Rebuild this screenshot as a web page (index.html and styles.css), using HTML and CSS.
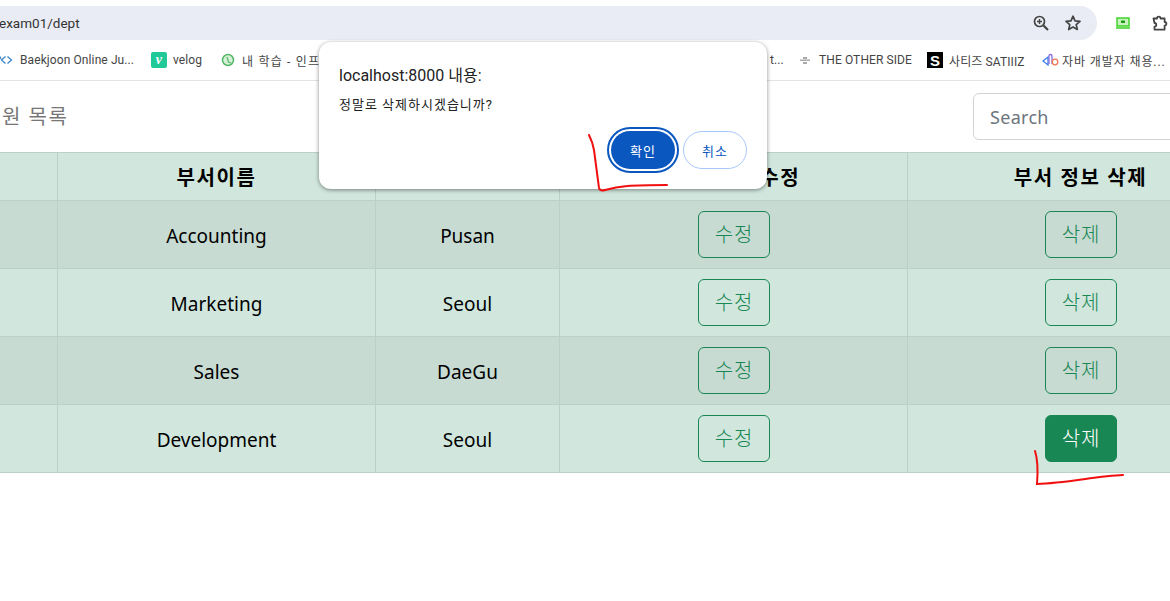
FILE: index.html
```html
<!DOCTYPE html>
<html lang="ko">
<head>
  <meta charset="UTF-8" />
  <title>부서 목록</title>
  <link rel="stylesheet" href="styles.css">
</head>
<body>
  <div class="toolbar">
    <div class="address">
      <span class="url">exam01/dept</span>
      <svg class="addr-icon" width="18" height="18" viewBox="0 0 18 18"><circle cx="7.5" cy="7.5" r="5" fill="none" stroke="#444" stroke-width="1.7"/><path d="M11.5 11.5 16 16" stroke="#444" stroke-width="2.2"/><path d="M5 7.5h5M7.5 5v5" stroke="#444" stroke-width="1.4"/></svg>
      <svg class="addr-icon" width="18" height="18" viewBox="0 0 18 18"><path d="M9 2.2l2 4.6 5 .5-3.8 3.3 1.1 4.9L9 13l-4.300 2.500 1.100-4.900L2 7.300l5-.5z" fill="none" stroke="#444" stroke-width="1.700" stroke-linejoin="round"/></svg>
    </div>
    <svg class="ext" width="14" height="12" viewBox="0 0 14 12"><rect x="1" y="1" width="12" height="8" fill="#c8f2c0" stroke="#35d01f" stroke-width="1.400"/><rect x="5" y="3.500" width="4" height="2.500" fill="#1c9c10"/><path d="M0 11h14" stroke="#35d01f" stroke-width="1.500"/></svg>
    <svg class="puzzle" width="17" height="16" viewBox="0 0 17 16"><path d="M1.500 3.500h3.500a1.800 1.800 0 0 1 3.600 0h4v3.500a1.800 1.800 0 0 1 0 3.600v4H2.500v-3a1.800 1.800 0 0 0 0-3.600z" fill="none" stroke="#444" stroke-width="1.800" stroke-linejoin="round"/></svg>
  </div>

  <div class="bookmarks">
    <span class="mark mark-boj">
      <svg width="16" height="12" viewBox="0 0 16 12"><path d="M1 1l2 4M7.500 2.500 3.500 6l4 3.500M9.500 2.500l4 3.500-4 3.500" fill="none" stroke="#3a86c8" stroke-width="1.300"/></svg>
      Baekjoon Online Ju...
    </span>
    <span class="mark mark-velog"><span class="velog-icon">v</span>velog</span>
    <span class="mark mark-inf">
      <svg width="14" height="14" viewBox="0 0 14 14"><circle cx="7" cy="7" r="5.500" fill="#d6f0d8" stroke="#55b868" stroke-width="1.500"/><path d="M6 4l1.500 5L10 10" fill="none" stroke="#55b868" stroke-width="1.200"/></svg>
      내 학습 - 인프런
    </span>
    <span class="mark mark-trunc">t...</span>
    <span class="mark mark-side">
      <svg width="10" height="8" viewBox="0 0 10 8"><path d="M3 1h4v2H3zM0 3.500h10v1.500H0zM3 6h4v2H3z" fill="#aaa"/></svg>
      THE OTHER SIDE
    </span>
    <span class="mark mark-sat"><span class="sat-icon">S</span>사티즈 SATIIIZ</span>
    <span class="mark mark-java">
      <svg width="17" height="14" viewBox="0 0 17 14"><path d="M1 8l5-4v8z" fill="none" stroke="#3b7de8" stroke-width="1.300"/><path d="M7 11V3a1.500 1.500 0 0 1 3 0v8" fill="none" stroke="#8a6de0" stroke-width="1.300"/><circle cx="13" cy="9" r="2.800" fill="none" stroke="#ef7a55" stroke-width="1.300"/></svg>
      자바 개발자 채용...
    </span>
  </div>

  <nav class="navbar">
    <span class="brand">원 목록</span>
    <input class="search" type="text" placeholder="Search" />
  </nav>

  <div class="table-wrap">
    <table class="dept">
      <colgroup>
        <col class="c-no"><col class="c-name"><col class="c-loc"><col class="c-act"><col class="c-last">
      </colgroup>
      <thead>
        <tr><th></th><th>부서이름</th><th>부서위치</th><th>부서 정보 수정</th><th>부서 정보 삭제</th></tr>
      </thead>
      <tbody>
        <tr><td></td><td>Accounting</td><td>Pusan</td><td><button class="btn">수정</button></td><td><button class="btn">삭제</button></td></tr>
        <tr><td></td><td>Marketing</td><td>Seoul</td><td><button class="btn">수정</button></td><td><button class="btn">삭제</button></td></tr>
        <tr><td></td><td>Sales</td><td>DaeGu</td><td><button class="btn">수정</button></td><td><button class="btn">삭제</button></td></tr>
        <tr><td></td><td>Development</td><td>Seoul</td><td><button class="btn">수정</button></td><td><button class="btn btn-on">삭제</button></td></tr>
      </tbody>
    </table>
  </div>

  <div class="dialog">
    <div class="dialog-title">localhost:8000 내용:</div>
    <div class="dialog-msg">정말로 삭제하시겠습니까?</div>
    <div class="dialog-btns">
      <button class="ok">확인</button>
      <button class="cancel">취소</button>
    </div>
  </div>

  <!-- red pen marks drawn over the screenshot -->
  <svg class="pen" width="1170" height="601" viewBox="0 0 1170 601">
    <path d="M589 135c3 6 4 9 5 15l5 38c1 3 3 3 6 2 14-4 25-5 62-5" />
    <path d="M1035 451c3 9 3 20 2 33 30-1 60-8 86-9" />
  </svg>
</body>
</html>
```
FILE: styles.css
```css
html, body {
  margin: 0;
  height: 601px;
  overflow: hidden;
}

body {
  position: relative;
  background: #fff;
  color: #000;
  font-family: "Noto Sans", "Noto Sans CJK KR", sans-serif;
}

.toolbar {
  display: flex;
  align-items: center;
  height: 34px;
  padding-top: 6px;
}

.address {
  display: flex;
  align-items: center;
  gap: 14px;
  width: 1097px;
  height: 34px;
  flex-shrink: 0;
  box-sizing: border-box;
  padding-right: 15px;
  background: #e9ecf5;
  border-radius: 0 17px 17px 0;
}

.url {
  flex: 1;
  font-size: 13.5px;
  color: #333;
  margin-left: -1px;
  font-family: "Roboto", sans-serif;
}

.addr-icon {
  display: block;
}

.ext {
  margin-left: 19px;
}

.puzzle {
  margin-left: 22px;
}

.bookmarks {
  position: relative;
  height: 40px;
  border-bottom: 1px solid #e3e3e3;
  font-size: 12px;
  letter-spacing: 0.1px;
  color: #444;
  font-family: "Roboto", "Noto Sans CJK KR", sans-serif;
}

.mark {
  position: absolute;
  top: 11px;
  display: flex;
  align-items: center;
  gap: 6px;
  height: 18px;
  white-space: nowrap;
}

.mark-boj { left: -2px; }
.mark-velog { left: 151px; }
.mark-inf { left: 221px; gap: 7px; letter-spacing: 1.2px; }
.mark-trunc { left: 770px; }
.mark-side { left: 800px; gap: 9px; }
.mark-sat { left: 927px; }
.mark-java { left: 1042px; gap: 3px; letter-spacing: 0.9px; }

.velog-icon {
  display: flex;
  align-items: center;
  justify-content: center;
  width: 16px;
  height: 16px;
  background: #20c997;
  border-radius: 2px;
  color: #fff;
  font-family: "Liberation Serif", serif;
  font-style: italic;
  font-weight: bold;
  font-size: 14px;
}

.sat-icon {
  display: flex;
  align-items: center;
  justify-content: center;
  width: 16px;
  height: 16px;
  background: #000;
  color: #fff;
  font-family: "Liberation Sans", sans-serif;
  font-weight: bold;
  font-size: 15px;
}

.navbar {
  display: flex;
  align-items: center;
  justify-content: space-between;
  height: 71px;
  overflow: hidden;
}

.brand {
  font-size: 20px;
  letter-spacing: 1.5px;
  color: #777;
  margin-left: 2px;
  margin-top: -3px;
}

.search {
  width: 260px;
  height: 47px;
  box-sizing: border-box;
  margin-right: -63px;
  margin-top: -1px;
  padding: 2px 16px 0;
  border: 1px solid #d0d3d8;
  border-radius: 6px;
  font-family: "Noto Sans", sans-serif;
  font-size: 18px;
  letter-spacing: 0.3px;
}

.search::placeholder {
  color: #6c757d;
  opacity: 1;
}

.table-wrap {
  margin-left: -100px;
  width: 1353px;
}

.dept {
  border-collapse: collapse;
  table-layout: fixed;
  width: 1353px;
  color: #000;
}

.c-no { width: 157px; }
.c-name { width: 318px; }
.c-loc { width: 184px; }
.c-act { width: 348px; }
.c-last { width: 346px; }

.dept th, .dept td {
  border: 1px solid #bcd0c7;
  text-align: center;
  padding: 0;
  font-size: 19px;
  background: #d1e7dd;
}

.dept th {
  height: 47px;
  font-size: 20px;
  letter-spacing: 1.6px;
  font-weight: bold;
}

.dept td {
  height: 68px;
  padding-top: 2px;
  box-sizing: border-box;
  vertical-align: middle;
}

.dept tbody tr:nth-child(odd) td {
  background: #c7dbd2;
}

.dept td:has(.btn) {
  padding-top: 0;
}

.btn {
  display: block;
  margin: 0 auto;
  width: 72px;
  height: 47px;
  padding: 0 0 3px 1px;
  background: transparent;
  border: 1px solid #198754;
  border-radius: 6px;
  color: #198754;
  font-family: "Noto Sans CJK KR", sans-serif;
  font-size: 20px;
  font-weight: 300;
  letter-spacing: 0.8px;
}

.btn-on {
  background: #198754;
  color: #fff;
}

.dialog {
  position: absolute;
  left: 319px;
  top: 42px;
  width: 448px;
  height: 147px;
  box-sizing: border-box;
  padding: 25px 20px 0;
  background: #fff;
  border-radius: 12px;
  box-shadow: 0 1px 4px rgba(0, 0, 0, 0.45);
  color: #222;
  font-family: "Roboto", "Noto Sans CJK KR", sans-serif;
}

.dialog-title {
  font-size: 16px;
  line-height: 18px;
}

.dialog-msg {
  margin-top: 12px;
  font-size: 13px;
  letter-spacing: 1px;
  line-height: 16px;
}

.dialog-btns {
  display: flex;
  justify-content: flex-end;
  gap: 8px;
  margin-top: 18px;
}

.ok, .cancel {
  width: 64px;
  height: 38px;
  border-radius: 19px;
  font-family: "Noto Sans CJK KR", sans-serif;
  font-size: 13px;
  letter-spacing: 1px;
  padding: 0;
}

.ok {
  background: #0b57c0;
  color: #fff;
  border: 0;
  outline: 2px solid #0b57c0;
  outline-offset: 2px;
}

.cancel {
  background: #fff;
  color: #0b57c0;
  border: 1px solid #a8c7fa;
}

.pen {
  position: absolute;
  left: 0;
  top: 0;
  fill: none;
  stroke: #f01010;
  stroke-width: 2;
  stroke-linecap: round;
}
```
